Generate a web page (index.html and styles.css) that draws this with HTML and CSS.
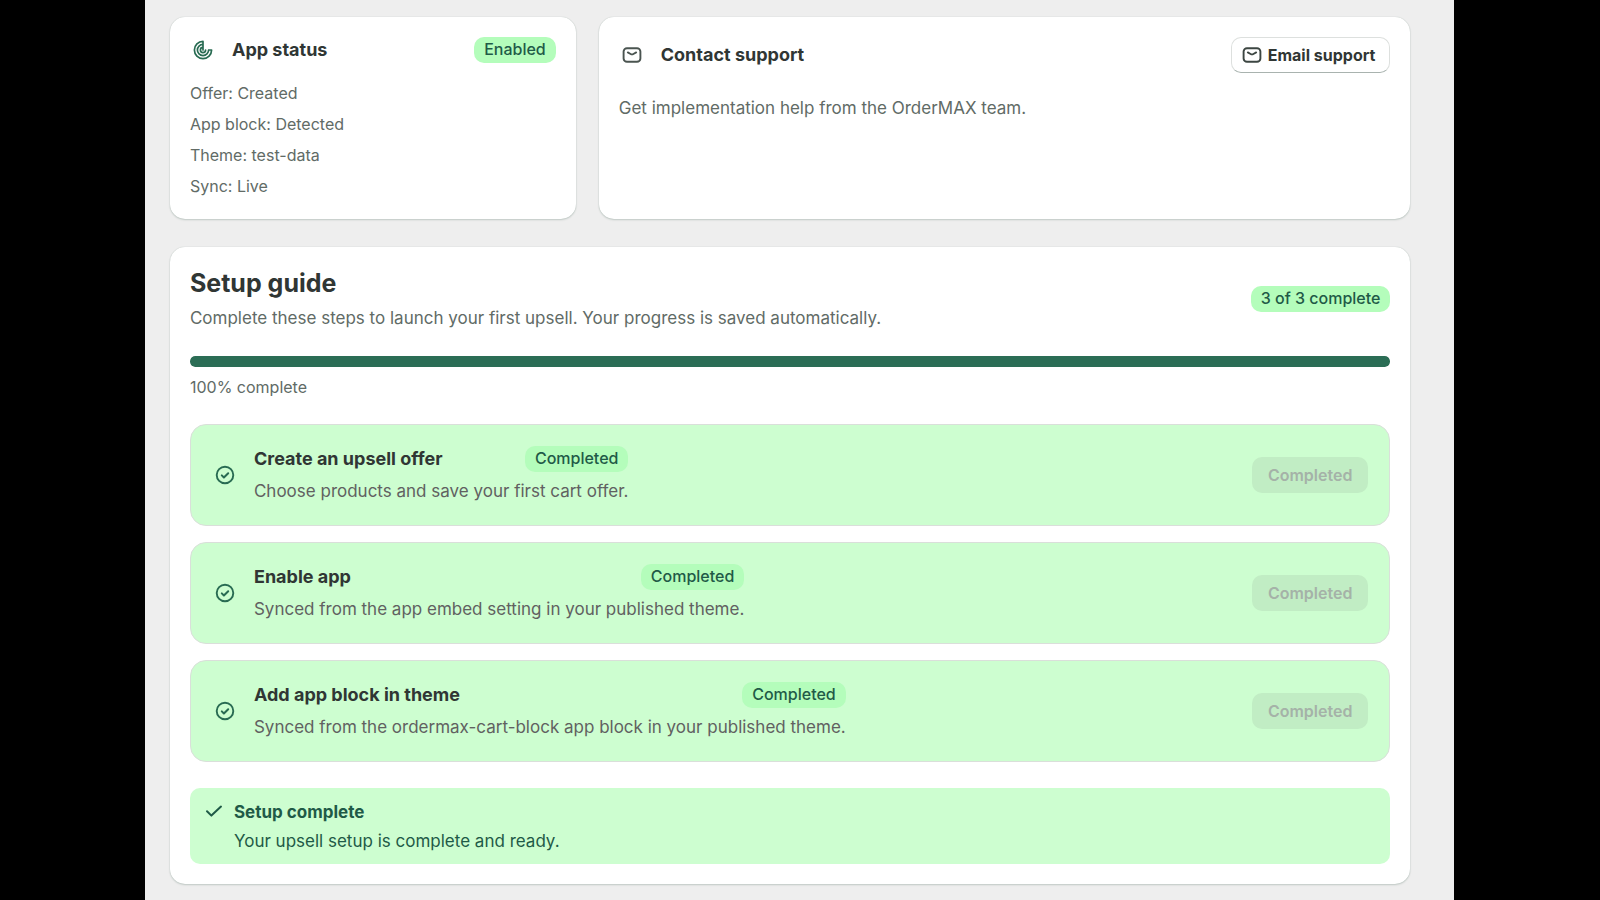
FILE: index.html
```
<!DOCTYPE html>
<html lang="en">
  <head>
    <meta charset="UTF-8" />
    <meta name="viewport" content="width=device-width, initial-scale=1.0" />
    <title>OrderMAX</title>
    <link rel="stylesheet" href="styles.css">
  </head>
  <body>
    <svg class="sprite" aria-hidden="true">
      <symbol id="icon-email" viewBox="0 0 20 20">
        <rect x="1.6" y="3.2" width="16.8" height="13.6" rx="3.4" fill="none" stroke="currentColor" stroke-width="1.9" />
        <path d="M5.8 7.4l2.8 1.6a2.8 2.8 0 0 0 2.8 0l2.8-1.6" fill="none" stroke="currentColor" stroke-width="1.8" stroke-linecap="round" />
      </symbol>
      <symbol id="icon-check-circle" viewBox="0 0 20 20">
        <circle cx="10" cy="10" r="8.3" fill="none" stroke="currentColor" stroke-width="1.9" />
        <path d="M6.8 10.4l2.1 2.1 4.3-4.3" fill="none" stroke="currentColor" stroke-width="2" stroke-linecap="round" stroke-linejoin="round" />
      </symbol>
      <symbol id="icon-status" viewBox="0 0 20 20">
        <path d="M10 1.4v8.6M10 1.4a8.6 8.6 0 1 0 8.6 8.6h-2.6M10 4.4a5.6 5.6 0 1 0 5.6 5.6M10 7.4a2.6 2.6 0 1 0 2.6 2.6" fill="none" stroke="currentColor" stroke-width="1.7" stroke-linecap="round" stroke-linejoin="round" />
      </symbol>
    </svg>

    <main class="page">
      <div class="top-cards">
        <section class="card">
          <div class="card-header">
            <svg class="icon icon-green"><use href="#icon-status" /></svg>
            <h2 class="card-title">App status</h2>
            <span class="badge">Enabled</span>
          </div>
          <ul class="status-list">
            <li>Offer: Created</li>
            <li>App block: Detected</li>
            <li>Theme: test-data</li>
            <li>Sync: Live</li>
          </ul>
        </section>

        <section class="card">
          <div class="card-header">
            <svg class="icon"><use href="#icon-email" /></svg>
            <h2 class="card-title">Contact support</h2>
            <button class="button" type="button">
              <svg class="icon-small"><use href="#icon-email" /></svg>
              Email support
            </button>
          </div>
          <p class="support-text">Get implementation help from the OrderMAX team.</p>
        </section>
      </div>

      <section class="card">
        <div class="setup-header">
          <div>
            <h1 class="setup-title">Setup guide</h1>
            <p class="text">Complete these steps to launch your first upsell. Your progress is saved automatically.</p>
          </div>
          <span class="badge">3 of 3 complete</span>
        </div>

        <div class="progress" role="progressbar" aria-label="Setup progress" aria-valuemin="0" aria-valuemax="100" aria-valuenow="100">
          <div class="progress-bar" style="width: 100%"></div>
        </div>
        <p class="progress-label">100% complete</p>

        <div class="steps">
          <div class="step">
            <svg class="icon icon-green"><use href="#icon-check-circle" /></svg>
            <div class="step-body">
              <div class="step-heading">
                <h3 class="step-title">Create an upsell offer</h3>
                <span class="badge">Completed</span>
              </div>
              <p class="step-text">Choose products and save your first cart offer.</p>
            </div>
            <button class="button-disabled" type="button" disabled>Completed</button>
          </div>

          <div class="step">
            <svg class="icon icon-green"><use href="#icon-check-circle" /></svg>
            <div class="step-body">
              <div class="step-heading">
                <h3 class="step-title">Enable app</h3>
                <span class="badge">Completed</span>
              </div>
              <p class="step-text">Synced from the app embed setting in your published theme.</p>
            </div>
            <button class="button-disabled" type="button" disabled>Completed</button>
          </div>

          <div class="step">
            <svg class="icon icon-green"><use href="#icon-check-circle" /></svg>
            <div class="step-body">
              <div class="step-heading">
                <h3 class="step-title">Add app block in theme</h3>
                <span class="badge">Completed</span>
              </div>
              <p class="step-text">Synced from the ordermax-cart-block app block in your published theme.</p>
            </div>
            <button class="button-disabled" type="button" disabled>Completed</button>
          </div>
        </div>

        <div class="banner">
          <svg class="banner-icon" viewBox="0 0 20 20">
            <path d="M3 10.2l4.4 4.4L17 5.6" fill="none" stroke="currentColor" stroke-width="2" stroke-linecap="round" stroke-linejoin="round" />
          </svg>
          <div>
            <h3 class="banner-title">Setup complete</h3>
            <p class="banner-text">Your upsell setup is complete and ready.</p>
          </div>
        </div>
      </section>
    </main>
  </body>
</html>
```
FILE: styles.css
```
* {
  box-sizing: border-box;
}

body {
  margin: 0;
  background-color: #000;
  color: #303634;
  font-family: Inter, sans-serif;
  font-size: 17px;
  line-height: 26px;
}

h1,
h2,
h3,
p,
ul {
  margin: 0;
  padding: 0;
}

.sprite {
  display: none;
}

.page {
  display: flex;
  flex-direction: column;
  gap: 28px;
  min-height: 100vh;
  margin: 0 9.1% 0 9.06%;
  padding: 17px 44px 17px 25px;
  background-color: #eee;
}

.top-cards {
  display: grid;
  grid-template-columns: 1fr 2fr;
  gap: 23px;
}

.card {
  padding: 20px;
  border-radius: 15px;
  background-color: #fff;
  box-shadow: 0 1px 2px rgba(30, 70, 50, 0.2), 0 0 1px rgba(30, 70, 50, 0.25);
}

.card-header {
  display: flex;
  align-items: center;
  gap: 16px;
}

.card-title {
  flex: 1;
  font-size: 18px;
  font-weight: 650;
}

.icon {
  flex: none;
  width: 26px;
  height: 20px;
  color: #4a5450;
}

.icon-green {
  color: #286b52;
}

.icon-small {
  width: 20px;
  height: 20px;
}

.badge {
  padding: 0 10px 1px;
  border-radius: 10px;
  background-color: #b4fdbb;
  color: #1f5a47;
  font-size: 16px;
  font-weight: 450;
  line-height: 25px;
  white-space: nowrap;
}

.status-list {
  display: grid;
  gap: 6px;
  margin-top: 18px;
  color: #616b66;
  font-size: 16px;
  line-height: 25px;
  list-style: none;
}

.support-text {
  margin-top: 22px;
  color: #616b66;
}

.button {
  display: flex;
  align-items: center;
  gap: 6px;
  height: 36px;
  padding: 0 14px 0 10px;
  border: 1px solid #dde0de;
  border-bottom-color: #a9b3af;
  border-radius: 10px;
  background-color: #fff;
  color: #303634;
  font-family: inherit;
  font-size: 16px;
  font-weight: 650;
}

.button .icon-small {
  color: #3c4642;
}

.setup-header {
  display: flex;
  align-items: center;
  justify-content: space-between;
}

.setup-title {
  font-size: 25px;
  font-weight: 650;
  line-height: 32px;
}

.text {
  margin-top: 6px;
  color: #616b66;
}

.progress {
  height: 11px;
  margin-top: 25px;
  border-radius: 5px;
  background-color: #e3e3e3;
  overflow: hidden;
}

.progress-bar {
  height: 100%;
  border-radius: 5px;
  background-color: #2b6d55;
}

.progress-label {
  margin-top: 7px;
  color: #616b66;
  font-size: 16px;
}

.steps {
  display: grid;
  gap: 16px;
  margin-top: 24px;
}

.step {
  display: flex;
  align-items: center;
  gap: 16px;
  padding: 21px;
  border: 1px solid #dadfda;
  border-radius: 16px;
  background-color: #cdfed0;
}

.step-heading {
  display: flex;
  align-items: center;
  justify-content: space-between;
}

.step-title {
  font-size: 18px;
  font-weight: 650;
}

.step-text {
  margin-top: 6px;
  color: #616161;
}

.button-disabled {
  height: 36px;
  margin-left: auto;
  padding: 0 16px;
  border: 0;
  border-radius: 10px;
  background-color: #c1edc4;
  color: #a5b2a8;
  font-family: inherit;
  font-size: 16px;
  font-weight: 600;
}

.banner {
  display: flex;
  gap: 10px;
  margin-top: 26px;
  padding: 11px 14px 10px;
  border-radius: 10px;
  background-color: #cdfed0;
  color: #1f5a47;
}

.banner-icon {
  width: 20px;
  height: 24px;
}

.banner-title {
  font-size: 17px;
  font-weight: 650;
}

.banner-text {
  margin-top: 3px;
}
```
